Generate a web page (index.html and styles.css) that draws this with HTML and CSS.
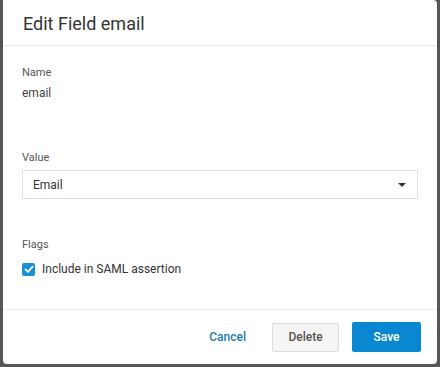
FILE: index.html
```html
<!DOCTYPE html>
<html lang="en">
<head>
    <meta charset="UTF-8">
    <title>Edit Field email</title>
    <link rel="stylesheet" href="styles.css">
</head>
<body>
    <div class="dialog">
        <div class="dialog-header">
            <h2>Edit Field email</h2>
        </div>
        <div class="dialog-body">
            <div class="field">
                <div class="field-label">Name</div>
                <div class="field-value">email</div>
            </div>
            <div class="field field-value-select">
                <div class="field-label">Value</div>
                <div class="select">
                    <span>Email</span>
                    <span class="caret"></span>
                </div>
            </div>
            <div class="field field-flags">
                <div class="field-label">Flags</div>
                <label class="checkbox">
                    <span class="box">
                        <svg width="10" height="8" viewBox="0 0 10 8"><path d="M1 4 L4 6.8 L9 1.2" fill="none" stroke="#fff" stroke-width="1.8"/></svg>
                    </span>
                    Include in SAML assertion
                </label>
            </div>
        </div>
        <div class="dialog-footer">
            <button class="btn btn-link">Cancel</button>
            <button class="btn btn-default">Delete</button>
            <button class="btn btn-primary">Save</button>
        </div>
    </div>
</body>
</html>
```

FILE: styles.css
```css
body {
    margin: 0;
    background-color: #555;
    font-family: Roboto, "Liberation Sans", Arial, sans-serif;
    color: #333;
}
.dialog {
    background-color: #fff;
    margin: 0 3px;
    height: 364px;
    border-radius: 0 4px 4px 4px;
    display: flex;
    flex-direction: column;
}
.dialog-header {
    height: 46px;
    border-bottom: 1px solid #e6e6e6;
    padding: 0 20px;
    display: flex;
    align-items: center;
    box-sizing: border-box;
}
.dialog-header h2 {
    margin: 0;
    font-size: 18px;
    font-weight: normal;
    color: #333;
    padding-top: 2px;
}
.dialog-body {
    flex: 1;
    padding: 20px 19px 0 19px;
}
.field-label {
    font-size: 11px;
    color: #555;
    line-height: 14px;
}
.field-value {
    font-size: 12px;
    color: #444;
    margin-top: 6px;
    line-height: 14px;
}
.field-value-select {
    margin-top: 51px;
}
.select {
    margin-top: 5px;
    height: 29px;
    border: 1px solid #e2e2e2;
    box-sizing: border-box;
    display: flex;
    align-items: center;
    justify-content: space-between;
    padding: 0 11px 0 10px;
    font-size: 12px;
    color: #333;
}
.caret {
    width: 0;
    height: 0;
    border-left: 4px solid transparent;
    border-right: 4px solid transparent;
    border-top: 4px solid #333;
}
.field-flags {
    margin-top: 39px;
}
.checkbox {
    display: flex;
    align-items: center;
    gap: 7px;
    margin-top: 10px;
    font-size: 12px;
    color: #333;
}
.box {
    width: 13px;
    height: 13px;
    background-color: #1a8fd9;
    border-radius: 2px;
    display: flex;
    align-items: center;
    justify-content: center;
}
.dialog-footer {
    height: 55px;
    box-sizing: border-box;
    border-top: 1px solid #ececec;
    display: flex;
    align-items: center;
    justify-content: flex-end;
    gap: 13px;
    padding: 0 16px 0 0;
}
.btn {
    font-family: Roboto, "Liberation Sans", Arial, sans-serif;
    font-size: 12px;
    font-weight: 500;
    height: 29px;
    border-radius: 2px;
    cursor: pointer;
}
.btn-link {
    background: none;
    border: none;
    color: #1a7ab5;
    padding: 0 13px 0 0;
}
.btn-default {
    background-color: #f5f5f5;
    border: 1px solid #dcdcdc;
    color: #555;
    width: 67px;
}
.btn-primary {
    background-color: #0a87d1;
    border: none;
    color: #fff;
    width: 69px;
    height: 30px;
}
```
